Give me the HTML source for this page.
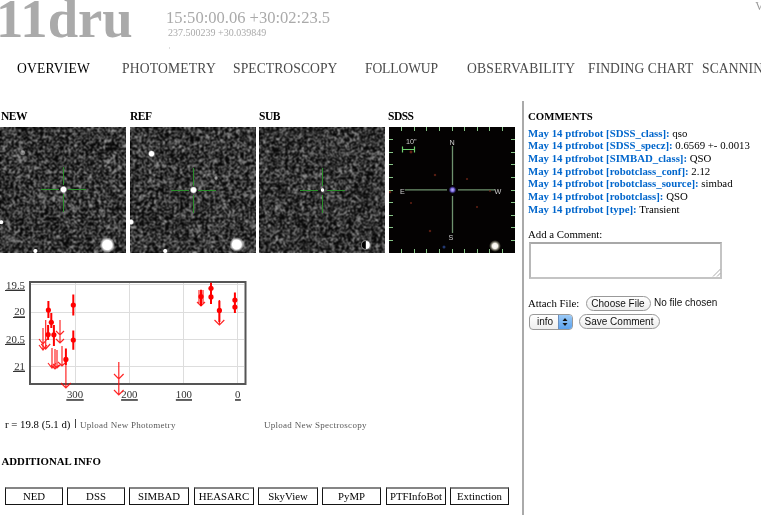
<!DOCTYPE html>
<html><head><meta charset="utf-8">
<style>
html,body{margin:0;padding:0;background:#fff;width:761px;height:515px;overflow:hidden;position:relative}
body{font-family:"Liberation Serif",serif;color:#000}
.a{position:absolute;white-space:pre;line-height:1}
.nav{font-size:13.6px;color:#4a4a4a;top:62.2px}
.lbl{font-size:11.5px;font-weight:bold;top:111.1px;letter-spacing:-0.5px}
.img{position:absolute;top:127px;width:126px;height:126px;overflow:hidden;background:#373737}
.img svg{position:absolute;left:0;top:0}
.cm{font-size:10.8px;left:528px}
.cm b{color:#0066cc}
.btn{position:absolute;top:487px;height:15px;border:1px solid #151515;border-top:2px solid #858585;font-size:10.8px;text-align:center;line-height:14px}
.sans{font-family:"Liberation Sans",sans-serif}
</style></head><body>
<div id="wrap" style="position:absolute;left:0;top:0;width:761px;height:515px;background:#fff;will-change:transform;overflow:hidden">

<!-- header -->
<div class="a" style="left:-4px;top:-8.3px;font-size:54.7px;font-weight:bold;color:#aaa">11dru</div>
<div class="a" style="left:166px;top:10px;font-size:16.55px;color:#aaa">15:50:00.06 +30:02:23.5</div>
<div class="a" style="left:168px;top:27.6px;font-size:10px;color:#aaa">237.500239 +30.039849</div>
<div style="position:absolute;left:169px;top:47px;width:1px;height:2px;background:#ddd"></div>
<div class="a" style="left:755.2px;top:1.2px;font-size:11.5px;color:#999">V</div>

<!-- nav -->
<div class="a nav" style="left:17px;color:#000;letter-spacing:0.2px">OVERVIEW</div>
<div class="a nav" style="left:122px;letter-spacing:0.2px">PHOTOMETRY</div>
<div class="a nav" style="left:233px;letter-spacing:0.08px">SPECTROSCOPY</div>
<div class="a nav" style="left:365px;letter-spacing:-0.13px">FOLLOWUP</div>
<div class="a nav" style="left:467px;letter-spacing:0.24px">OBSERVABILITY</div>
<div class="a nav" style="left:588px;letter-spacing:0.07px">FINDING CHART</div>
<div class="a nav" style="left:702px;letter-spacing:0.1px">SCANNING</div>

<!-- labels -->
<div class="a lbl" style="left:1px">NEW</div>
<div class="a lbl" style="left:130px">REF</div>
<div class="a lbl" style="left:259px">SUB</div>
<div class="a lbl" style="left:388px">SDSS</div>

<!-- images -->
<svg width="0" height="0" style="position:absolute">
 <defs>
  <filter id="nz" x="0" y="0" width="100%" height="100%"><feTurbulence type="turbulence" baseFrequency="0.4" numOctaves="1" seed="7"/><feColorMatrix type="matrix" values="0 0 0 0 1  0 0 0 0 1  0 0 0 0 1  -8 0 0 0 1.1"/><feConvolveMatrix order="3" kernelMatrix="1 2 1 2 4 2 1 2 1" divisor="16" preserveAlpha="false" edgeMode="duplicate"/></filter>
  <filter id="nz2" x="0" y="0" width="100%" height="100%"><feTurbulence type="turbulence" baseFrequency="0.4" numOctaves="1" seed="13"/><feColorMatrix type="matrix" values="0 0 0 0 1  0 0 0 0 1  0 0 0 0 1  -8 0 0 0 1.1"/><feConvolveMatrix order="3" kernelMatrix="1 2 1 2 4 2 1 2 1" divisor="16" preserveAlpha="false" edgeMode="duplicate"/></filter>
  <filter id="nz3" x="0" y="0" width="100%" height="100%"><feTurbulence type="turbulence" baseFrequency="0.42" numOctaves="1" seed="29"/><feColorMatrix type="matrix" values="0 0 0 0 1  0 0 0 0 1  0 0 0 0 1  -8 0 0 0 1.1"/><feConvolveMatrix order="3" kernelMatrix="1 2 1 2 4 2 1 2 1" divisor="16" preserveAlpha="false" edgeMode="duplicate"/></filter>
  <radialGradient id="st"><stop offset="0" stop-color="#fff"/><stop offset="0.6" stop-color="#fff"/><stop offset="1" stop-color="#fff" stop-opacity="0"/></radialGradient>
 </defs>
</svg>

<div class="img" style="left:0">
 <svg width="126" height="126">
  <rect width="126" height="126" fill="#080808"/>
  <rect width="126" height="126" fill="#fff" filter="url(#nz)" opacity="0.6"/>
  <circle cx="22.7" cy="25.8" r="3" fill="url(#st)" opacity="0.45"/>
  <circle cx="107.3" cy="118" r="7.8" fill="url(#st)"/>
  <circle cx="1.3" cy="95.2" r="2.5" fill="url(#st)"/>
  <circle cx="35.4" cy="124" r="2.5" fill="url(#st)"/>
  <g stroke="#2a8f2a" stroke-width="1"><path d="M41 62.5H59M68 62.5H86M63.5 40V58M63.5 67V85"/></g>
  <circle cx="63.5" cy="62.5" r="3.8" fill="url(#st)"/>
 </svg>
</div>
<div class="img" style="left:130px">
 <svg width="126" height="126">
  <rect width="126" height="126" fill="#080808"/>
  <rect width="126" height="126" fill="#fff" filter="url(#nz2)" opacity="0.6"/>
  <circle cx="21.5" cy="26.7" r="3.6" fill="url(#st)"/>
  <circle cx="86" cy="51" r="2" fill="url(#st)" opacity="0.5"/>
  <circle cx="106.8" cy="117.5" r="7.5" fill="url(#st)"/>
  <circle cx="1" cy="95" r="3.2" fill="url(#st)"/>
  <circle cx="35.2" cy="124" r="2.5" fill="url(#st)"/>
  <g stroke="#2a8f2a" stroke-width="1"><path d="M41 63.5H59M68 63.5H86M63.5 41V59M63.5 68V86"/></g>
  <circle cx="63.5" cy="63" r="3.8" fill="url(#st)"/>
 </svg>
</div>
<div class="img" style="left:259px">
 <svg width="126" height="126">
  <rect width="126" height="126" fill="#080808"/>
  <rect width="126" height="126" fill="#fff" filter="url(#nz3)" opacity="0.6"/>
  <g stroke="#2a8f2a" stroke-width="1"><path d="M41 63.5H59M68 63.5H86M63.5 41V59M63.5 68V86"/></g>
  <circle cx="63.5" cy="63" r="2.2" fill="url(#st)"/>
  <circle cx="106.8" cy="118" r="5" fill="#888" opacity="0.8"/><circle cx="106.8" cy="118" r="4" fill="#fff"/>
  <path d="M106.8 114 A4 4 0 0 0 106.8 122 Z" fill="#000"/>
 </svg>
</div>
<div class="img" style="left:389px;background:#050202">
 <svg width="126" height="126">
  <defs><radialGradient id="bs"><stop offset="0" stop-color="#fff"/><stop offset="0.45" stop-color="#f4f0e8"/><stop offset="1" stop-color="#886" stop-opacity="0"/></radialGradient>
  <radialGradient id="cs"><stop offset="0" stop-color="#c0b8ff"/><stop offset="0.45" stop-color="#8070e0"/><stop offset="1" stop-color="#3020a0" stop-opacity="0"/></radialGradient>
  <radialGradient id="rs"><stop offset="0" stop-color="#b04020"/><stop offset="1" stop-color="#501010" stop-opacity="0"/></radialGradient></defs>
  <rect width="126" height="126" fill="#040202"/>
  <g stroke="#86c486" stroke-width="1">
   <path d="M12.5 0V4M25.5 0V4M37.5 0V4M50.5 0V4M63.5 0V4M75.5 0V4M88.5 0V4M100.5 0V4M113.5 0V4"/>
   <path d="M12.5 126V122M25.5 126V122M37.5 126V122M50.5 126V122M63.5 126V122M75.5 126V122M88.5 126V122M100.5 126V122M113.5 126V122"/>
   <path d="M0 12.5H4M0 25.5H4M0 37.5H4M0 50.5H4M0 63.5H4M0 75.5H4M0 88.5H4M0 100.5H4M0 113.5H4"/>
   <path d="M126 12.5H122M126 25.5H122M126 37.5H122M126 50.5H122M126 63.5H122M126 75.5H122M126 88.5H122M126 100.5H122M126 113.5H122"/>
  </g>
  <g stroke="#6e926e" stroke-width="1.3"><path d="M16 62.9H58M69 62.9H106M63.5 19V58M63.5 69V106"/></g>
  <path d="M13 22.5H26M13.5 19.5V25.5M25.5 19.5V25.5" stroke="#6fcf6f" stroke-width="1.2"/>
  <g fill="#d0d0d0" font-family="Liberation Sans" font-size="7.2">
   <text x="17" y="16.5">10"</text>
   <text x="60.5" y="18">N</text>
   <text x="11" y="66.5">E</text>
   <text x="105.5" y="66.5">W</text>
   <text x="59.5" y="113">S</text>
  </g>
  <circle cx="63.5" cy="62.9" r="4" fill="url(#cs)"/>
  <circle cx="106" cy="119" r="6" fill="url(#bs)"/>
  <circle cx="22" cy="25" r="2.2" fill="url(#rs)"/>
  <circle cx="46" cy="48" r="1.8" fill="url(#rs)"/>
  <circle cx="78" cy="52" r="1.6" fill="url(#rs)"/>
  <circle cx="1" cy="65" r="2" fill="url(#rs)"/>
  <circle cx="41" cy="104" r="1.8" fill="url(#rs)"/>
  <circle cx="22" cy="76" r="1.6" fill="url(#rs)"/>
  <circle cx="88" cy="80" r="1.6" fill="url(#rs)"/>
  <circle cx="101" cy="64" r="1.4" fill="url(#rs)"/>
  <circle cx="55" cy="120" r="1.5" fill="#3050a0" opacity="0.7"/>
 </svg>
</div>

<!-- separator -->
<div style="position:absolute;left:522px;top:101px;width:2px;height:414px;background:#aaa"></div>

<!-- comments -->
<div class="a" style="left:528px;top:110.5px;font-size:10.8px;font-weight:bold">COMMENTS</div>
<div class="a cm" style="top:127.7px"><b>May 14 ptfrobot [SDSS_class]:</b> qso</div>
<div class="a cm" style="top:140.35px"><b>May 14 ptfrobot [SDSS_specz]:</b> 0.6569 +- 0.0013</div>
<div class="a cm" style="top:153.0px"><b>May 14 ptfrobot [SIMBAD_class]:</b> QSO</div>
<div class="a cm" style="top:165.65px"><b>May 14 ptfrobot [robotclass_conf]:</b> 2.12</div>
<div class="a cm" style="top:178.3px"><b>May 14 ptfrobot [robotclass_source]:</b> simbad</div>
<div class="a cm" style="top:190.95px"><b>May 14 ptfrobot [robotclass]:</b> QSO</div>
<div class="a cm" style="top:203.6px"><b>May 14 ptfrobot [type]:</b> Transient</div>

<div class="a cm" style="top:228.9px">Add a Comment:</div>
<div style="position:absolute;left:529px;top:241.5px;width:189px;height:33.5px;border:2px solid #c4c4c4;border-top-color:#a8a8a8;border-left-color:#b8b8b8"></div>
<svg style="position:absolute;left:711px;top:267px" width="10" height="10"><path d="M9.5 2L2 9.5M9.5 6L6 9.5" stroke="#aaa" stroke-width="1"/></svg>

<div class="a cm" style="top:297.6px">Attach File:</div>
<div class="sans" style="position:absolute;left:585.5px;top:295.5px;width:63px;height:13px;border:1px solid #999;border-radius:8px;background:linear-gradient(#fff,#eee);font-size:10px;line-height:13px;text-align:center;color:#111">Choose File</div>
<div class="a sans" style="left:654px;top:297.5px;font-size:10px;color:#111">No file chosen</div>

<div class="sans" style="position:absolute;left:529px;top:314px;width:42px;height:13.5px;border:1px solid #999;border-radius:4px;background:linear-gradient(#fff,#eee);font-size:10px;line-height:13px;color:#111;overflow:hidden"><span style="position:absolute;left:7px;top:0">info</span><span style="position:absolute;left:28px;top:0;width:14px;height:13.5px;background:linear-gradient(#9ccaf6,#5ba2ee);border-left:1px solid #6a8fbf"></span><svg style="position:absolute;left:31px;top:2px" width="8" height="10"><path d="M4 1L6.5 4H1.5Z M4 9L6.5 6H1.5Z" fill="#111"/></svg></div>
<div class="sans" style="position:absolute;left:578.5px;top:313.5px;width:79px;height:13.5px;border:1px solid #999;border-radius:8px;background:linear-gradient(#fff,#eee);font-size:10px;line-height:13.5px;text-align:center;color:#111">Save Comment</div>

<!-- chart -->
<svg style="position:absolute;left:0;top:270px" width="260" height="140">
 <g stroke="#ddd" stroke-width="1" fill="none">
  <path d="M31 14.5H244M31 42.5H244M31 69.5H244M31 96.5H244"/>
  <path d="M75.5 13V113M129.5 13V113M183.5 13V113M237.5 13V113"/>
 </g>
 <rect x="30" y="12" width="215.5" height="102" fill="none" stroke="#555" stroke-width="2"/>
 <g font-family="Liberation Serif" font-size="10.8" fill="#333" text-decoration="underline">
  <text x="25" y="18.6" text-anchor="end">19.5</text>
  <text x="25" y="45.4" text-anchor="end">20</text>
  <text x="25" y="72.6" text-anchor="end">20.5</text>
  <text x="25" y="99.6" text-anchor="end">21</text>
  <text x="75" y="128.4" text-anchor="middle">300</text>
  <text x="129.4" y="128.4" text-anchor="middle">200</text>
  <text x="183.9" y="128.4" text-anchor="middle">100</text>
  <text x="237.8" y="128.4" text-anchor="middle">0</text>
 </g>
 <g stroke="#333" stroke-width="1">
  <path d="M5 20.5H25M13 47.5H25M5 74.5H25M13 101.5H25M66 130H84M121 130H138M176 130H192M235 130H241"/>
 </g>
 <g stroke="#f00" stroke-width="2" fill="#f00">
  <path d="M48.4 31V48M73.3 24.6V45.5M51.3 43V58M53.9 55V76M48.1 55V70M73.3 60.5V79.7M65.9 78.5V95M211 12.7V34M234.9 22.6V43M201 19.7V36M219.4 30.7V52"/>
  <circle cx="48.4" cy="40.1" r="2.6" stroke="none"/>
  <circle cx="73.3" cy="35" r="2.6" stroke="none"/>
  <circle cx="51.3" cy="52.3" r="2.6" stroke="none"/>
  <circle cx="53.9" cy="64.8" r="2.6" stroke="none"/>
  <circle cx="48.1" cy="64.5" r="2.6" stroke="none"/>
  <circle cx="73.3" cy="70" r="2.6" stroke="none"/>
  <circle cx="65.9" cy="89.4" r="2.6" stroke="none"/>
  <circle cx="211" cy="18.3" r="2.6" stroke="none"/>
  <circle cx="211" cy="26.9" r="2.6" stroke="none"/>
  <circle cx="234.9" cy="30.1" r="2.6" stroke="none"/>
  <circle cx="234.9" cy="37.1" r="2.6" stroke="none"/>
  <circle cx="201" cy="26.6" r="2.6" stroke="none"/>
  <circle cx="219.4" cy="40.4" r="2.6" stroke="none"/>
 </g>
 <g stroke="#f00" stroke-width="1.2" fill="none" opacity="0.85">
  <path d="M43 58V80M39 75L43 80L47 75M39 69L43 74L47 69"/>
  <path d="M45.7 50V79M41.2 74L45.7 79L50.2 74"/>
  <path d="M60 50V73M56 61L60 65L64 61M56 69L60 73L64 69"/>
  <path d="M52 78V97M48 93L52 98L56 93"/>
  <path d="M55 79V99M51 95L55 99L59 95"/>
  <path d="M57 80V98M53 94L57 98L61 94"/>
  <path d="M62 76V96M58 92L62 96L66 92"/>
  <path d="M65.9 95V118M61 113L65.9 118L70.8 113"/>
  <path d="M118.8 92V125M114 104L118.8 109L123.6 104M114 120L118.8 125L123.6 120"/>
  <path d="M201 20V36M197 32L201 36L205 32M199 20V34M203 20V34"/>
  <path d="M219.4 30V55M214.5 50L219.4 55L224.3 50"/>
 </g>
</svg>

<!-- photometry text -->
<div class="a" style="left:5px;top:419px;font-size:10.8px">r = 19.8 (5.1 d)</div>
<div style="position:absolute;left:75px;top:419px;width:1.4px;height:9px;background:#444"></div>
<div class="a" style="left:80px;top:421px;font-size:9px;letter-spacing:0.27px;color:#5a5a5a">Upload New Photometry</div>
<div class="a" style="left:264px;top:421.1px;font-size:9px;letter-spacing:0.27px;color:#5a5a5a">Upload New Spectroscopy</div>

<!-- additional info -->
<div class="a" style="left:1.5px;top:456px;font-size:10.8px;font-weight:bold">ADDITIONAL INFO</div>
<div class="btn" style="left:5px;width:56px">NED</div>
<div class="btn" style="left:67px;width:56px">DSS</div>
<div class="btn" style="left:129px;width:58px">SIMBAD</div>
<div class="btn" style="left:194px;width:58px">HEASARC</div>
<div class="btn" style="left:258px;width:58px">SkyView</div>
<div class="btn" style="left:322px;width:57px">PyMP</div>
<div class="btn" style="left:386px;width:58px">PTFInfoBot</div>
<div class="btn" style="left:450px;width:57px">Extinction</div>

</div>
</body></html>
